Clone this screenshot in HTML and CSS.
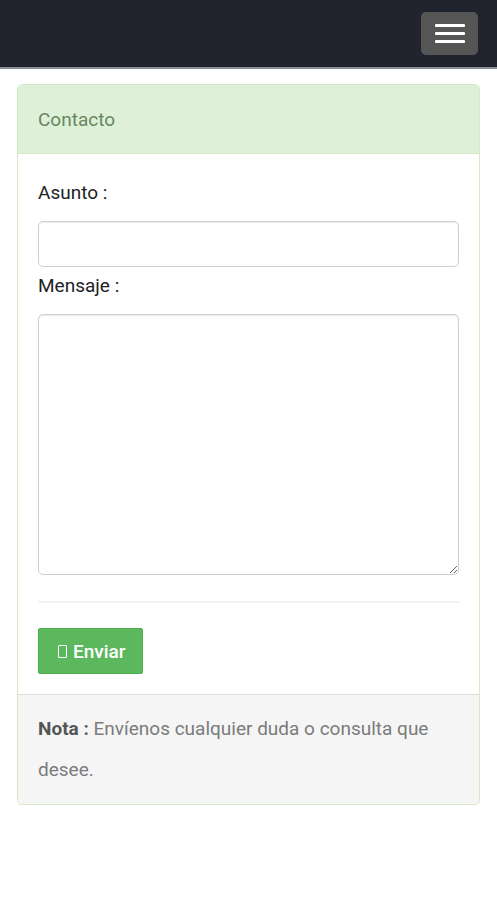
FILE: index.html
```html
<!DOCTYPE html>
<html lang="es">
<head>
  <meta charset="UTF-8">
  <meta name="viewport" content="width=device-width, initial-scale=1.0">
  <title>Contacto</title>
  <link rel="stylesheet" href="styles.css">
</head>
<body>

  <!-- Barra superior -->
  <nav class="navbar">
    <button class="navbar-toggle" type="button" aria-label="Menu">
      <span class="icon-bar"></span>
      <span class="icon-bar"></span>
      <span class="icon-bar"></span>
    </button>
  </nav>

  <div class="container">
    <div class="panel">
      <div class="panel-heading">Contacto</div>

      <div class="panel-body">
        <label for="asunto">Asunto :</label>
        <input type="text" id="asunto">

        <label for="mensaje">Mensaje :</label>
        <textarea id="mensaje"></textarea>

        <hr>

        <button class="btn-success" type="button">
          <span class="btn-icon"></span> Enviar
        </button>
      </div>

      <div class="panel-footer">
        <b>Nota :</b> Envíenos cualquier duda o consulta que desee.
      </div>
    </div>
  </div>

</body>
</html>
```

FILE: styles.css
```css
* { box-sizing: border-box; }
body { font-family: Roboto, "Liberation Sans", Arial, sans-serif; background: #fff; margin: 0; padding: 0; color: #333; font-size: 19px; }

.navbar { height: 69px; background: #21242f; border-bottom: 2px solid #8d8f94; display: flex; justify-content: flex-end; align-items: flex-start; padding: 12px 19px 0 0; }
.navbar-toggle { width: 57px; height: 43px; background: #555; border: none; border-radius: 5px; display: flex; flex-direction: column; align-items: center; justify-content: center; gap: 5px; padding: 0; cursor: pointer; }
.icon-bar { display: block; width: 30px; height: 3px; background: #fff; border-radius: 1px; }

.container { padding: 15px 17px 0 17px; }
.panel { border: 1px solid #d6e9c6; border-radius: 5px; overflow: hidden; box-shadow: 0 1px 1px rgba(0,0,0,0.05); }
.panel-heading { background: #dff0d8; color: #67875f; border-bottom: 1px solid #d6e9c6; height: 69px; padding: 0 20px; display: flex; align-items: center; font-size: 19px; }

.panel-body { padding: 29px 20px 20px 20px; background: #fff; }
label { display: block; font-size: 19px; color: #222; margin-bottom: 18px; line-height: 20px; }
input, textarea { display: block; width: 100%; border: 1px solid #cfcfcf; border-radius: 5px; font-family: inherit; font-size: 19px; padding: 6px 12px; background: #fff; box-shadow: inset 0 1px 1px rgba(0,0,0,0.075); }
input { height: 46px; margin-bottom: 9px; }
textarea { height: 261px; resize: vertical; }
hr { border: 0; border-top: 2px solid #f3f3f3; margin: 26px 0 25px 0; }

.btn-success { background: #5cb85c; color: #fff; border: 1px solid #4cae4c; border-radius: 2px; height: 46px; padding: 0 16px 0 19px; font-family: inherit; font-size: 19px; font-weight: 500; display: flex; align-items: center; gap: 6px; cursor: pointer; }
.btn-icon { display: inline-block; width: 9px; height: 13px; border: 1.5px solid #fff; border-radius: 1px; }

.panel-footer { background: #f5f5f5; border-top: 1px solid #ddd; padding: 13px 20px 14px 20px; color: #7b7b7b; line-height: 41px; font-size: 19px; }
.panel-footer b { color: #555; font-weight: 700; }
```
